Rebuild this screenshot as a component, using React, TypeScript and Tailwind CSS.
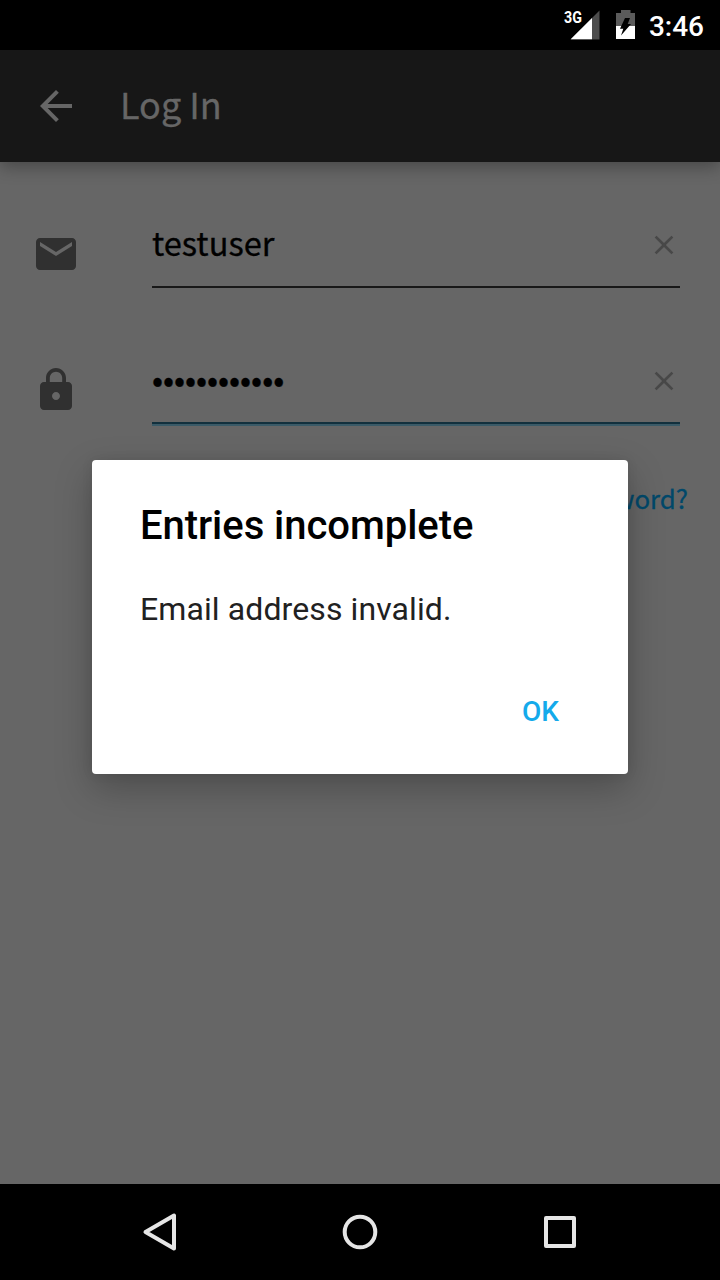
import type { ReactNode } from "react";

const sans = "font-['Noto_Sans_CJK_JP','Noto_Sans',sans-serif] [-webkit-text-stroke:0.3px_currentColor]";

function StatusBar() {
  return (
    <div className="flex h-[50px] items-center justify-end bg-black pr-4">
      <div className="relative mr-4 h-[50px] w-[36px]">
        <svg className="block h-[50px] w-[36px]" viewBox="0 0 36 50">
          <path d="M35.5 10.5V39.5H6.5z" fill="#4d4d4d" />
          <path d="M28 18V39.3H6.7z" fill="#fff" />
        </svg>
        <span className="absolute left-0 top-[8px] origin-left scale-x-[0.84] text-[17px] leading-[18px] font-bold text-white">
          3G
        </span>
      </div>
      <svg className="mr-[13px] block h-[50px] w-[20px]" viewBox="0 0 20 50">
        <path d="M0 26V13h5V10h9.5v3h4.5V26z" fill="#5b5b5b" />
        <path d="M0 26h19v13H0z" fill="#fff" />
        <path d="M9 18h5l-2.3 6H15L5 35.6l2.3-6.9H4z" fill="#000" />
      </svg>
      <span className="relative top-[2px] text-[28px] leading-[48px] font-medium text-white">3:46</span>
    </div>
  );
}

function Header() {
  return (
    <header className="flex h-[112px] items-center bg-[#171717] pl-8 text-[#666] shadow-[0_5px_16px_rgba(0,0,0,0.3)]">
      <svg className="size-12" viewBox="0 0 24 24" fill="currentColor">
        <path d="M20 11H7.83l5.59-5.59L12 4l-8 8 8 8 1.41-1.41L7.83 13H20v-2z" />
      </svg>
      <h1 className={`${sans} mb-[7px] ml-[40px] text-[36px] leading-[54px]`}>Log In</h1>
    </header>
  );
}

function ClearButton() {
  return (
    <button className="mt-[25px] size-8 text-[#484848]">
      <svg className="size-8" viewBox="0 0 24 24" fill="currentColor">
        <path d="M19 6.41L17.59 5 12 10.59 6.41 5 5 6.41 10.59 12 5 17.59 6.41 19 12 13.41 17.59 19 19 17.59 13.41 12z" />
      </svg>
    </button>
  );
}

function Field({ icon, children }: { icon: string; children: ReactNode }) {
  return (
    <div className="flex">
      <svg className="mt-[26px] mr-[72px] size-12 shrink-0 text-[#303030]" viewBox="0 0 24 24" fill="currentColor">
        <path d={icon} />
      </svg>
      {children}
    </div>
  );
}

const mail =
  "M20 4H4c-1.1 0-1.99.9-1.99 2L2 18c0 1.1.9 2 2 2h16c1.1 0 2-.9 2-2V6c0-1.1-.9-2-2-2zm0 4l-8 5-8-5V6l8 5 8-5v2z";
const lock =
  "M18 8h-1V6c0-2.76-2.24-5-5-5S7 3.24 7 6v2H6c-1.1 0-2 .9-2 2v10c0 1.1.9 2 2 2h12c1.1 0 2-.9 2-2V10c0-1.1-.9-2-2-2zm-6 9c-1.1 0-2-.9-2-2s.9-2 2-2 2 .9 2 2-.9 2-2 2zm3.1-9H8.9V6c0-1.71 1.39-3.1 3.1-3.1 1.71 0 3.1 1.39 3.1 3.1v2z";

function Dialog() {
  return (
    <div
      role="dialog"
      className="absolute top-[460px] left-[92px] flex h-[314px] w-[536px] flex-col rounded-[4px] bg-white px-12 pt-[41px] shadow-[0_14px_36px_rgba(0,0,0,0.25),0_0_12px_rgba(0,0,0,0.08)]"
    >
      <h2 className="text-[40px] leading-[50px] font-medium tracking-[-0.05px] whitespace-nowrap text-black">
        Entries incomplete
      </h2>
      <p className="mt-[37px] text-[32px] leading-[42px] tracking-[0.1px] text-[#212121]">Email address invalid.</p>
      <button className="mt-[62px] mr-[21px] self-end text-[28px] leading-[40px] font-medium text-[#14aaeb]">OK</button>
    </div>
  );
}

function NavBar() {
  return (
    <nav className="flex h-24 items-center justify-center gap-[152px] bg-black">
      <svg className="size-12" viewBox="0 0 48 48" fill="none" stroke="#e6e6e6" strokeWidth="4" strokeLinejoin="round">
        <path d="M38 7.5V40.5L9.5 24z" />
      </svg>
      <svg className="size-12" viewBox="0 0 48 48" fill="none" stroke="#e6e6e6" strokeWidth="4">
        <circle cx="24" cy="24" r="15.3" />
      </svg>
      <svg className="size-12" viewBox="0 0 48 48" fill="none" stroke="#e6e6e6" strokeWidth="4" strokeLinejoin="round">
        <path d="M10 10h28v28H10z" />
      </svg>
    </nav>
  );
}

export default function App() {
  return (
    <div className="relative flex h-[1280px] w-[720px] flex-col overflow-hidden bg-[#666] font-['Roboto',sans-serif]">
      <StatusBar />
      <Header />
      <main className="flex grow flex-col pt-[42px] pr-10 pl-8">
        <Field icon={mail}>
          <div className="flex h-[84px] grow items-start justify-between border-b-2 border-[#181818]">
            <span className={`${sans} mt-[13px] text-[32.6px] leading-[50px] text-black`}>testuser</span>
            <ClearButton />
          </div>
        </Field>
        <div className="h-[52px]" />
        <Field icon={lock}>
          <div className="flex h-[86px] grow flex-col">
            <div className="flex h-[82px] justify-between">
              <span className={`${sans} mt-[13px] text-[32.4px] leading-[50px] text-black`}>••••••••••••</span>
              <ClearButton />
            </div>
            <div className="h-[2px] bg-[#12303d]" />
            <div className="h-[2px] bg-[#3a5a67]" />
          </div>
        </Field>
        <a className={`${sans} mt-[52px] -mr-2 self-end text-[25.8px] leading-[40px] text-[#00486a]`}>Forgot password?</a>
      </main>
      <Dialog />
      <NavBar />
    </div>
  );
}
